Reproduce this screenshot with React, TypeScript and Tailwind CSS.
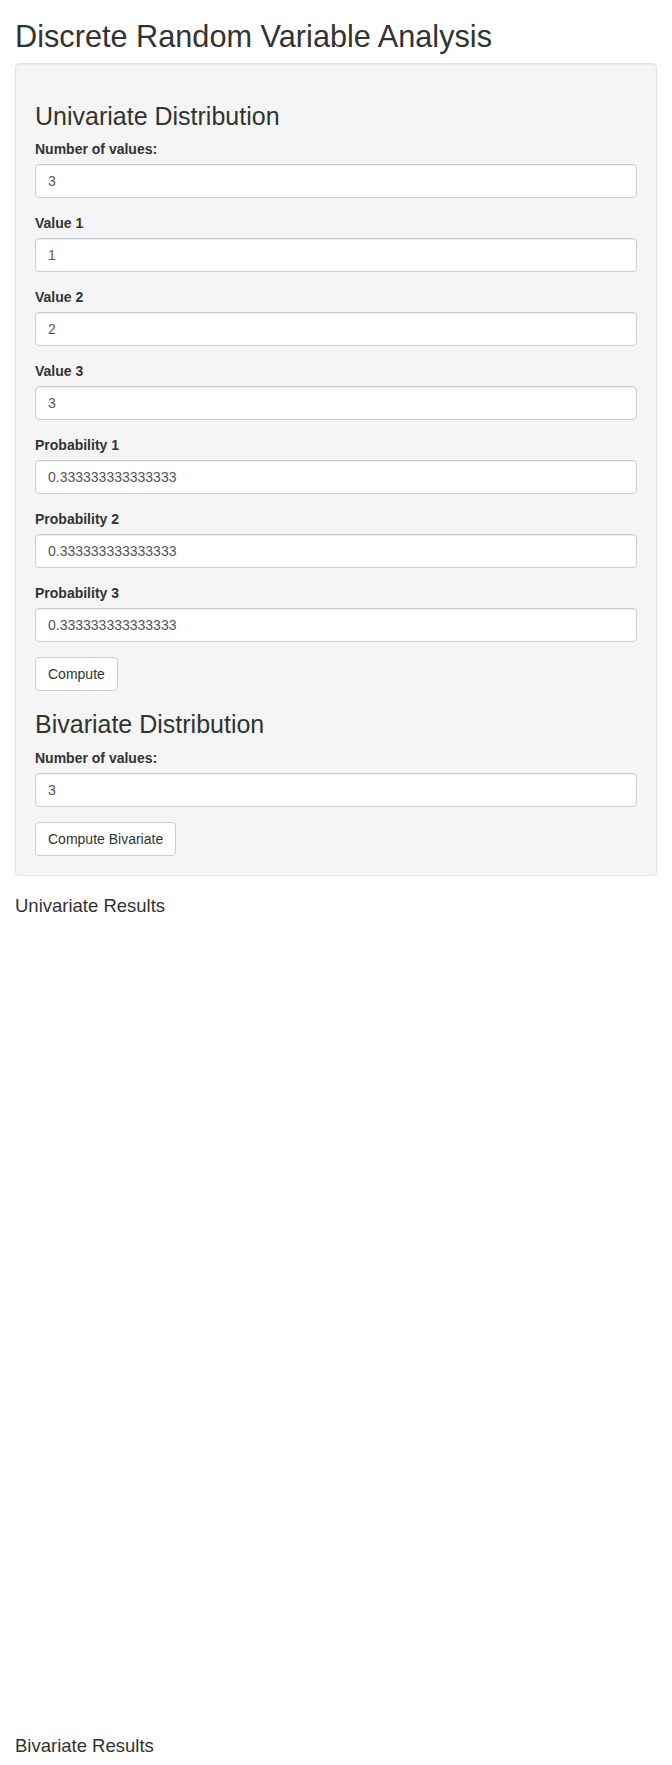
import React from "react";

const font = { fontFamily: '"Liberation Sans", Arial, Helvetica, sans-serif' };

function Field({ label, value }: { label: string; value: string }) {
  return (
    <div className="mb-[15px]">
      <label className="block mb-[5px] text-[14px] leading-[20px] font-bold text-[#333]">{label}</label>
      <input
        readOnly
        defaultValue={value}
        className="block w-full h-[34px] px-[12px] py-[6px] text-[14px] leading-[20px] text-[#555] bg-white border border-[#ccc] rounded-[4px] shadow-[inset_0_1px_1px_rgba(0,0,0,0.075)] outline-none"
      />
    </div>
  );
}

function Btn({ children }: { children: React.ReactNode }) {
  return (
    <button className="inline-block h-[34px] px-[12px] py-[6px] text-[14px] leading-[20px] text-[#333] bg-white border border-[#ccc] rounded-[4px]">
      {children}
    </button>
  );
}

export default function App() {
  const p = "0.333333333333333";
  return (
    <div style={font} className="bg-white text-[#333] text-[14px] leading-[20px] min-h-[1765px]">
      <div className="px-[15px] flow-root">
        <h2 className="mt-[20px] mb-[10px] text-[30.7px] leading-[33px] font-normal text-[#333]">
          Discrete Random Variable Analysis
        </h2>
        <div className="mb-[20px] p-[19px] bg-[#f5f5f5] border border-[#e3e3e3] rounded-[4px] shadow-[inset_0_1px_1px_rgba(0,0,0,0.05)]">
          <h3 className="mt-[20px] mb-[10px] text-[25px] leading-[26.4px] font-normal">Univariate Distribution</h3>
          <Field label="Number of values:" value="3" />
          <Field label="Value 1" value="1" />
          <Field label="Value 2" value="2" />
          <Field label="Value 3" value="3" />
          <Field label="Probability 1" value={p} />
          <Field label="Probability 2" value={p} />
          <Field label="Probability 3" value={p} />
          <Btn>Compute</Btn>
          <h3 className="mt-[20px] mb-[10px] text-[25px] leading-[26.4px] font-normal">Bivariate Distribution</h3>
          <Field label="Number of values:" value="3" />
          <Btn>Compute Bivariate</Btn>
        </div>
        <h4 className="mt-[10px] mb-[10px] text-[18.5px] leading-[19.8px] font-normal">Univariate Results</h4>
        <div className="h-[800px]" />
        <h4 className="mt-[10px] mb-[10px] text-[18.5px] leading-[19.8px] font-normal">Bivariate Results</h4>
      </div>
    </div>
  );
}
